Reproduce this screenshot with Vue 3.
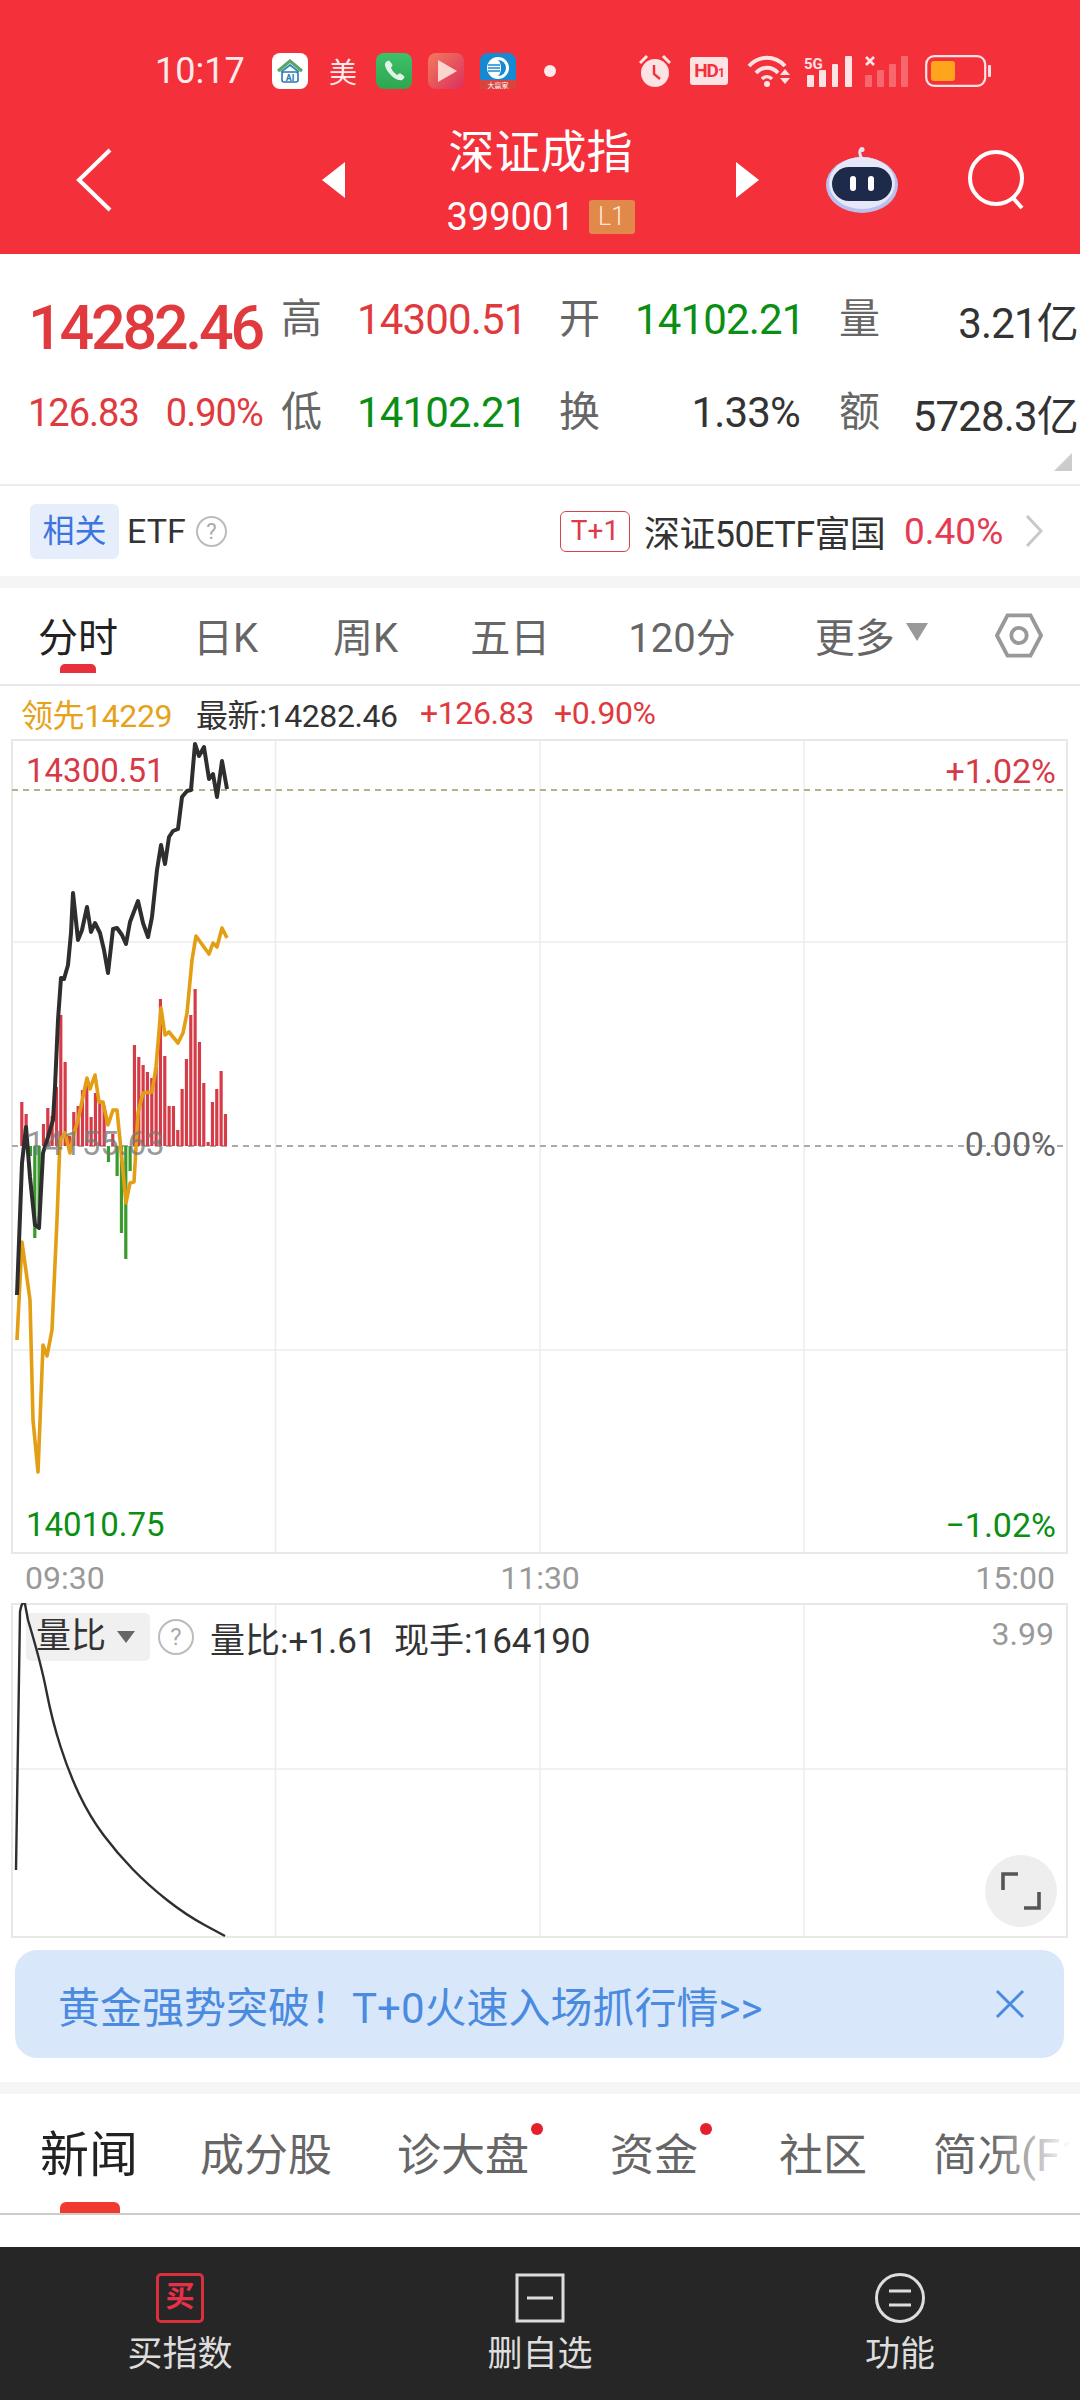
<script setup>
// black price line and amber average line, in page pixels
const priceLine = [[17,1295],[22,1163],[26,1127],[30,1177],[35,1225],[39,1228],[43,1153],[48,1137],[53,1120],[55,1087],[58,1020],[61,978],[64,979],[68,965],[71,933],[73,893],[78,940],[82,930],[87,907],[91,932],[95,923],[100,933],[104,950],[108,973],[113,929],[117,928],[122,935],[126,944],[130,922],[138,901],[143,923],[148,937],[152,917],[157,870],[161,845],[165,864],[169,837],[173,831],[178,829],[182,797],[187,791],[191,790],[195,744],[199,756],[204,747],[209,779],[213,774],[217,797],[222,761],[227,789]]
const avgLine = [[17,1340],[22,1242],[30,1300],[33,1420],[38,1472],[43,1345],[47,1356],[52,1330],[57,1220],[60,1140],[65,1133],[70,1153],[74,1133],[78,1120],[87,1078],[90,1089],[95,1075],[99,1102],[103,1102],[108,1125],[113,1110],[117,1110],[120,1140],[126,1203],[130,1183],[134,1182],[138,1113],[143,1093],[152,1092],[156,1067],[161,1008],[165,1035],[169,1032],[178,1043],[183,1033],[187,1013],[192,960],[196,936],[209,954],[213,943],[217,947],[222,928],[227,938]]
const ratioLine = [[28,1620],[41,1663],[52,1720],[69,1773],[90,1817],[117,1853],[148,1885],[186,1915],[225,1936]]

// volume bars, up is red and down is green
const barValues = [44,32,-10,-92,-80,22,38,30,59,131,84,10,34,40,56,68,29,53,46,40,-16,12,-30,-87,-113,-25,101,89,81,74,68,79,147,90,40,40,16,57,87,131,157,104,63,4,44,57,75,32]
const baseY = 1146
const bars = barValues.map((v, i) => ({
  x: 20.2 + i * 4.333,
  y: v > 0 ? baseY - v : baseY,
  h: Math.abs(v),
  color: v > 0 ? '#d63c48' : '#3a9a2e',
}))

const toPoints = (line) => line.map((p) => p.join(',')).join(' ')

// the ratio line falls off smoothly, so round it through the midpoints
function ratioPath() {
  let d = 'M16 1870 L20 1612 Q22 1600 25 1604 L' + ratioLine[0].join(' ')
  for (let i = 1; i < ratioLine.length - 1; i++) {
    const [x, y] = ratioLine[i]
    const [nx, ny] = ratioLine[i + 1]
    d += ` Q${x} ${y} ${(x + nx) / 2} ${(y + ny) / 2}`
  }
  return d + ' L225 1936'
}

const chartTabs = ['日K', '周K', '五日', '120分']
const gridX = [275.5, 540, 804]
</script>

<template>
  <div class="page">
    <header class="header">
      <div class="status">
        <span class="time">10:17</span>
        <svg class="app app-ai" viewBox="0 0 36 36">
          <rect width="36" height="36" rx="8" fill="#fff" />
          <path d="M6 18 L18 8 L30 18" fill="none" stroke="#5aa469" stroke-width="3" />
          <path d="M9 19 L18 12 L27 19" fill="none" stroke="#2f8fb8" stroke-width="2" />
          <rect x="10" y="19" width="16" height="10" rx="2" fill="none" stroke="#2a76b5" stroke-width="1.6" />
          <text x="18" y="27.5" text-anchor="middle" class="ai-text">AI</text>
        </svg>
        <span class="mei">美</span>
        <svg class="app app-phone" viewBox="0 0 36 36">
          <defs>
            <linearGradient id="ph" x1="0" y1="0" x2="0" y2="1">
              <stop offset="0" stop-color="#3dc16a" />
              <stop offset="1" stop-color="#2ea64f" />
            </linearGradient>
          </defs>
          <rect width="36" height="36" rx="8" fill="url(#ph)" />
          <path d="M10 9 C8 11 9 15 13 20 C17 25 22 28 26 27 C28 26 29 24 28 23 L24.5 20.5 C23.5 20 22.5 21 21.5 22 C19 21 15.5 17 15 14.5 C16 13.5 17 12.5 16 11 L13.5 8 C12.5 7.5 11 8 10 9 Z" fill="#fff" opacity=".85" />
        </svg>
        <svg class="app app-play" viewBox="0 0 36 36">
          <defs>
            <linearGradient id="pl" x1="0" y1="0" x2="1" y2="1">
              <stop offset="0" stop-color="#f47a5c" />
              <stop offset="1" stop-color="#db2f5e" />
            </linearGradient>
          </defs>
          <rect width="36" height="36" rx="8" fill="url(#pl)" />
          <path d="M10 7 L29 18 L10 29 Z" fill="#fbd6d0" />
        </svg>
        <svg class="app app-blue" viewBox="0 0 36 36">
          <rect width="36" height="36" rx="8" fill="#1789d2" />
          <circle cx="18" cy="15" r="11" fill="#fff" />
          <path d="M18 7 A8 8 0 0 1 18 23 C22 20 22 10 18 7 Z" fill="#1789d2" />
          <path d="M8 12 H20 M8 15 H20 M8 18 H20" stroke="#1789d2" stroke-width="1.4" />
          <rect y="27" width="36" height="9" fill="#d8453f" />
          <text x="18" y="34.5" text-anchor="middle" class="blue-text">大赢家</text>
        </svg>
        <i class="dot"></i>
        <svg class="alarm" viewBox="0 0 32 34">
          <circle cx="16" cy="19" r="14" fill="#fde3e3" />
          <path d="M15 11 V20 L21 25" fill="none" stroke="#f4313b" stroke-width="2.4" />
          <path d="M1 9 L8 2 M31 9 L24 2" stroke="#fde3e3" stroke-width="3" />
        </svg>
        <span class="hd">HD<small>1</small></span>
        <svg class="wifi" viewBox="0 0 46 32">
          <path d="M2 11 C12 0 28 0 38 11" fill="none" stroke="#fde3e3" stroke-width="4" />
          <path d="M9 18 C15 11 25 11 31 18" fill="none" stroke="#fde3e3" stroke-width="4" />
          <path d="M15 24 C18 21 22 21 25 24" fill="none" stroke="#fde3e3" stroke-width="3.5" />
          <circle cx="20" cy="29" r="3" fill="#fde3e3" />
          <path d="M33 20 L38 14 L43 20 Z M33 23 L43 23 L38 29 Z" fill="#fde3e3" />
        </svg>
        <svg class="signal" viewBox="0 0 48 32">
          <text x="0" y="14" class="five-g">5G</text>
          <rect x="3" y="20" width="7" height="12" rx="1" fill="#fde3e3" />
          <rect x="15" y="15" width="7" height="17" rx="1" fill="#fde3e3" />
          <rect x="28" y="9" width="6" height="23" rx="1" fill="#fde3e3" />
          <rect x="41" y="1" width="7" height="31" rx="1" fill="#fde3e3" />
        </svg>
        <svg class="signal-off" viewBox="0 0 44 32">
          <path d="M1 2 L9 10 M9 2 L1 10" stroke="#fde3e3" stroke-width="2.6" />
          <rect x="0" y="20" width="7" height="12" rx="1" fill="#fde3e3" opacity=".3" />
          <rect x="12" y="15" width="7" height="17" rx="1" fill="#fde3e3" opacity=".3" />
          <rect x="24" y="9" width="7" height="23" rx="1" fill="#fde3e3" opacity=".3" />
          <rect x="36" y="1" width="7" height="31" rx="1" fill="#fde3e3" opacity=".3" />
        </svg>
        <svg class="battery" viewBox="0 0 66 32">
          <rect x="1.2" y="1.2" width="59" height="29.6" rx="8" fill="none" stroke="#fde3e3" stroke-width="2.2" />
          <rect x="6" y="6" width="24" height="20" rx="3" fill="#ffa51c" />
          <rect x="63" y="10" width="3" height="12" rx="1" fill="#fde3e3" />
        </svg>
      </div>

      <div class="nav">
        <svg class="back" viewBox="0 0 38 64">
          <path d="M35 2 L4 32 L35 62" fill="none" stroke="#fff" stroke-width="4" />
        </svg>
        <i class="arrow arrow-left"></i>
        <div class="title">
          <div class="name">深证成指</div>
          <div class="code">399001<span class="level">L1</span></div>
        </div>
        <i class="arrow arrow-right"></i>
        <svg class="robot" viewBox="0 0 72 66">
          <path d="M36 12 C33 7 33 3 36 2" fill="none" stroke="#e3e3f5" stroke-width="3" />
          <circle cx="36" cy="2.5" r="2.5" fill="#e3e3f5" />
          <ellipse cx="36" cy="38" rx="36" ry="28" fill="#b9c0ee" />
          <ellipse cx="36" cy="36" rx="33" ry="26" fill="#e6e8fa" />
          <rect x="6" y="20" width="60" height="34" rx="17" fill="#1e2a4a" />
          <rect x="24" y="29" width="6" height="15" rx="3" fill="#fff" />
          <rect x="42" y="29" width="6" height="15" rx="3" fill="#fff" />
        </svg>
        <svg class="search" viewBox="0 0 60 60">
          <circle cx="29" cy="28" r="26" fill="none" stroke="#fff" stroke-width="4" />
          <path d="M46 48 L55 58" stroke="#fff" stroke-width="4" />
        </svg>
      </div>
    </header>

    <section class="quote">
      <div class="quote-row">
        <span class="price red">14282.46</span>
        <span class="label">高</span><span class="val red">14300.51</span>
        <span class="label">开</span><span class="val val-b green">14102.21</span>
        <span class="label">量</span><span class="val val-c dark">3.21亿</span>
      </div>
      <div class="quote-row">
        <span class="change red"><span>126.83</span><span>0.90%</span></span>
        <span class="label">低</span><span class="val green">14102.21</span>
        <span class="label">换</span><span class="val val-b dark">1.33%</span>
        <span class="label">额</span><span class="val val-c dark">5728.3亿</span>
      </div>
      <i class="corner"></i>
    </section>

    <section class="etf">
      <span class="etf-tag">相关</span>
      <span class="etf-name">ETF</span>
      <span class="help etf-help">?</span>
      <span class="t1">T+1</span>
      <span class="fund">深证50ETF富国</span>
      <span class="fund-rate">0.40%</span>
      <svg class="chev" viewBox="0 0 18 32">
        <path d="M2 1 L16 16 L2 31" fill="none" stroke="#c8c8c8" stroke-width="3" />
      </svg>
    </section>

    <div class="gap"></div>

    <nav class="chart-tabs">
      <span class="chart-tab active">分时<i></i></span>
      <span v-for="t in chartTabs" :key="t" class="chart-tab">{{ t }}</span>
      <span class="chart-tab more">更多<b></b></span>
      <svg class="hex" viewBox="0 0 50 46">
        <path d="M13 2 H37 L48 23 L37 44 H13 L2 23 Z" fill="none" stroke="#999" stroke-width="4" />
        <circle cx="25" cy="23" r="8" fill="none" stroke="#999" stroke-width="4" />
      </svg>
    </nav>

    <div class="info">
      <span class="lead">领先14229</span>
      <span class="latest">最新:14282.46</span>
      <span class="red info-a">+126.83</span>
      <span class="red info-b">+0.90%</span>
    </div>

    <div class="chart">
      <svg class="chart-svg" viewBox="0 739 1080 815">
        <g stroke="#ececec" stroke-width="1.5">
          <line v-for="x in gridX" :key="x" :x1="x" y1="739" :x2="x" y2="1553" />
          <line x1="12" y1="942" x2="1067" y2="942" />
          <line x1="12" y1="1350" x2="1067" y2="1350" />
        </g>
        <rect x="12" y="740" width="1055" height="813" fill="none" stroke="#e8e8e8" stroke-width="2" />
        <line x1="12" y1="790" x2="1067" y2="790" stroke="#b8b08c" stroke-width="2" stroke-dasharray="6 5" />
        <line x1="12" y1="1146" x2="1067" y2="1146" stroke="#aaa" stroke-width="2" stroke-dasharray="6 5" />
        <rect v-for="(b, i) in bars" :key="i" :x="b.x" :y="b.y" width="3.2" :height="b.h" :fill="b.color" />
        <polyline :points="toPoints(avgLine)" fill="none" stroke="#e39e14" stroke-width="3.6" stroke-linejoin="round" />
        <polyline :points="toPoints(priceLine)" fill="none" stroke="#2e2e2e" stroke-width="4" stroke-linejoin="round" />
      </svg>
      <span class="axis axis-l axis-top red-axis">14300.51</span>
      <span class="axis axis-r axis-top red-axis">+1.02%</span>
      <span class="axis axis-l axis-mid grey-axis">14155.63</span>
      <span class="axis axis-r axis-mid zero-axis">0.00%</span>
      <span class="axis axis-l axis-low green">14010.75</span>
      <span class="axis axis-r axis-low green">−1.02%</span>
    </div>

    <div class="times">
      <span>09:30</span>
      <span>11:30</span>
      <span>15:00</span>
    </div>

    <div class="sub-chart">
      <svg class="sub-svg" viewBox="0 1603 1080 335">
        <g stroke="#ececec" stroke-width="1.5">
          <line v-for="x in gridX" :key="x" :x1="x" y1="1603" :x2="x" y2="1937" />
          <line x1="12" y1="1769" x2="1067" y2="1769" />
        </g>
        <rect x="12" y="1604" width="1055" height="333" fill="none" stroke="#e8e8e8" stroke-width="2" />
      </svg>
      <div class="sub-head">
        <span class="ratio-pick">量比<b></b></span>
        <span class="help ratio-help">?</span>
        <span class="ratio-a">量比:+1.61</span>
        <span class="ratio-b">现手:164190</span>
      </div>
      <svg class="sub-line" viewBox="0 1603 1080 335">
        <path :d="ratioPath()" fill="none" stroke="#2e2e2e" stroke-width="2.4" stroke-linejoin="round" />
      </svg>
      <span class="sub-max">3.99</span>
      <span class="expand">
        <svg viewBox="0 0 40 38" width="40" height="38">
          <path d="M2 18 V2 H17 M38 20 V36 H23" fill="none" stroke="#555" stroke-width="3.6" />
        </svg>
      </span>
    </div>

    <div class="banner">
      <span>黄金强势突破！T+0火速入场抓行情&gt;&gt;</span>
      <svg class="banner-x" viewBox="0 0 30 30">
        <path d="M2 2 L28 28 M28 2 L2 28" stroke="#4a8be0" stroke-width="3" />
      </svg>
    </div>

    <div class="gap gap-b"></div>

    <nav class="news-tabs">
      <span class="news-tab active">新闻<i></i></span>
      <span class="news-tab t-2">成分股</span>
      <span class="news-tab t-3">诊大盘<em></em></span>
      <span class="news-tab t-4">资金<em></em></span>
      <span class="news-tab t-5">社区</span>
      <span class="news-tab t-6">简况(F1)</span>
      <i class="fade"></i>
    </nav>

    <footer class="actions">
      <div class="action">
        <span class="buy-icon">买</span>
        <span class="action-label">买指数</span>
      </div>
      <div class="action">
        <svg class="action-icon" viewBox="0 0 50 50">
          <rect x="2" y="2" width="46" height="46" fill="none" stroke="#ddd" stroke-width="3" />
          <path d="M12 25 H38" stroke="#ddd" stroke-width="3" />
        </svg>
        <span class="action-label">删自选</span>
      </div>
      <div class="action">
        <svg class="action-icon" viewBox="0 0 50 50">
          <circle cx="25" cy="25" r="23.5" fill="none" stroke="#ddd" stroke-width="3" />
          <path d="M14 18 H36 M14 32 H36" stroke="#ddd" stroke-width="3" />
        </svg>
        <span class="action-label">功能</span>
      </div>
    </footer>
  </div>
</template>

<style scoped>
.page {
  position: relative;
  width: 1080px;
  height: 2400px;
  overflow: hidden;
  background: #fff;
  font-family: Roboto, "Noto Sans CJK SC", sans-serif;
  color: #333;
}

.red { color: #e03a3e; }
.green { color: #0a8f14; }
.dark { color: #333; }

/* header */
.header {
  height: 254px;
  background: #f4313b;
  color: #fff;
}

.status {
  display: flex;
  align-items: center;
  height: 70px;
  padding: 36px 0 0 155px;
}

.time {
  width: 92px;
  font-size: 36px;
  color: #fdeaea;
}

.app {
  flex: none;
  width: 36px;
  height: 36px;
}

.app-ai { margin-left: 25px; }
.app-phone { margin-left: 19px; }
.app-play { margin-left: 16px; }
.app-blue { margin-left: 16px; }

.ai-text {
  font-size: 9px;
  font-weight: 700;
  fill: #2a76b5;
}

.blue-text {
  font-size: 7px;
  fill: #fff;
}

.mei {
  width: 28px;
  margin-left: 21px;
  font-size: 28px;
  color: #fdeaea;
}

.dot {
  width: 12px;
  height: 12px;
  margin-left: 28px;
  border-radius: 50%;
  background: #fdeaea;
}

.alarm { width: 32px; height: 34px; margin-left: 83px; }
.wifi { width: 46px; height: 32px; margin-left: 19px; }
.signal { width: 48px; height: 32px; margin-left: 11px; }
.signal-off { width: 44px; height: 32px; margin-left: 13px; }
.battery { width: 66px; height: 32px; margin-left: 16px; }

.five-g {
  font-size: 15px;
  font-weight: 700;
  fill: #fde3e3;
}

.hd {
  width: 38px;
  height: 28px;
  margin-left: 19px;
  border-radius: 3px;
  background: #fde3e3;
  color: #f4313b;
  font-size: 19px;
  font-weight: 700;
  line-height: 28px;
  text-align: center;
  letter-spacing: -1px;
}

.hd small { font-size: 12px; }

.nav {
  display: flex;
  align-items: center;
  height: 148px;
  padding-left: 75px;
  box-sizing: border-box;
}

.back { flex: none; width: 38px; height: 64px; }
.robot { flex: none; width: 72px; height: 66px; margin-left: 67px; }
.search { flex: none; width: 60px; height: 60px; margin-left: 69px; }

.arrow {
  flex: none;
  width: 0;
  height: 0;
  border-top: 18px solid transparent;
  border-bottom: 18px solid transparent;
}

.arrow-left {
  margin-left: 209px;
  border-right: 23px solid #fff;
}

.arrow-right { border-left: 23px solid #fff; }

.title {
  flex: none;
  width: 391px;
  text-align: center;
}

.name {
  height: 62px;
  font-size: 46px;
  line-height: 62px;
  margin-bottom: 12px;
}

.code {
  display: flex;
  align-items: center;
  justify-content: center;
  height: 44px;
  font-size: 38px;
}

.level {
  width: 46px;
  height: 34px;
  margin-left: 14px;
  background: #e0894a;
  border-radius: 3px;
  color: #ffe9d8;
  font-size: 25px;
  line-height: 34px;
  font-weight: 300;
}

/* quote panel */
.quote {
  position: relative;
  height: 232px;
  padding-top: 19px;
  box-sizing: border-box;
  border-bottom: 2px solid #ececec;
}

.quote-row {
  display: grid;
  grid-template-columns: 253px 76px 202px 76px 204px 60px 1fr;
  align-items: center;
  height: 93px;
  padding-left: 28px;
}

.price {
  padding-top: 16px;
  font-size: 61px;
  font-weight: 500;
  letter-spacing: -3.2px;
  white-space: nowrap;
}

.change {
  display: flex;
  gap: 27px;
  font-size: 38px;
  letter-spacing: -1px;
  white-space: nowrap;
}

.label {
  font-size: 41px;
  color: #666;
  line-height: 1;
}

.val {
  padding-right: 41px;
  font-size: 42px;
  text-align: right;
  letter-spacing: -0.85px;
  white-space: nowrap;
}

.val-b { padding-right: 39px; }
.val-c { padding-right: 2px; }

.corner {
  position: absolute;
  right: 8px;
  top: 199px;
  width: 0;
  height: 0;
  border-left: 18px solid transparent;
  border-bottom: 18px solid #ccc;
}

/* ETF row */
.etf {
  display: flex;
  align-items: center;
  height: 90px;
  padding-left: 30px;
}

.etf-tag {
  width: 89px;
  height: 55px;
  background: #e6eefc;
  border-radius: 6px;
  color: #3d74e0;
  font-size: 32px;
  line-height: 55px;
  text-align: center;
}

.etf-name {
  margin-left: 8px;
  font-size: 34px;
  width: 61px;
}

.help {
  display: inline-block;
  box-sizing: border-box;
  border: 2px solid #bbb;
  border-radius: 50%;
  color: #aaa;
  text-align: center;
}

.etf-help {
  width: 31px;
  height: 31px;
  margin-left: 8px;
  font-size: 22px;
  line-height: 27px;
}

.t1 {
  box-sizing: border-box;
  width: 70px;
  height: 41px;
  margin-left: 333px;
  border: 1.5px solid #d9434a;
  border-radius: 6px;
  color: #e03a4a;
  font-size: 28px;
  line-height: 37px;
  text-align: center;
}

.fund {
  margin-left: 14px;
  width: 240px;
  font-size: 36px;
  white-space: nowrap;
  letter-spacing: -0.6px;
}

.fund-rate {
  margin-left: 20px;
  width: 100px;
  color: #e63a52;
  font-size: 37px;
  white-space: nowrap;
}

.chev {
  width: 18px;
  height: 32px;
  margin-left: 21px;
}

.gap {
  height: 12px;
  background: #f5f5f5;
}

/* chart tabs */
.chart-tabs {
  position: relative;
  display: flex;
  align-items: center;
  height: 98px;
  padding: 0 0 2px 38px;
  box-sizing: border-box;
  border-bottom: 2px solid #e8e8e8;
}

.chart-tab {
  position: relative;
  margin-right: 72px;
  color: #666;
  font-size: 40px;
  white-space: nowrap;
}

.chart-tab:nth-child(2) { margin-right: 75px; }
.chart-tab:nth-child(4) { margin-right: 78px; }
.chart-tab:nth-child(5) { margin-right: 79px; }

.chart-tab.active {
  margin-right: 75px;
  color: #222;
}

.chart-tab.active i {
  position: absolute;
  left: 22px;
  top: 58px;
  width: 36px;
  height: 9px;
  border-radius: 5px 5px 0 0;
  background: #e8303a;
}

.more b {
  position: absolute;
  left: 91px;
  top: 17px;
  width: 0;
  height: 0;
  border-left: 11px solid transparent;
  border-right: 11px solid transparent;
  border-top: 18px solid #999;
}

.hex {
  position: absolute;
  left: 995px;
  top: 25px;
  width: 48px;
  height: 45px;
}

/* info line */
.info {
  display: flex;
  align-items: center;
  height: 53px;
  padding-left: 21px;
  font-size: 32px;
  letter-spacing: -0.4px;
  white-space: nowrap;
}

.lead { width: 175px; color: #e5a21a; }
.latest { width: 224px; color: #333; }
.info-a { width: 134px; }

/* main chart */
.chart {
  position: relative;
  height: 814px;
}

.chart-svg {
  display: block;
  width: 1080px;
  height: 815px;
}

.axis {
  position: absolute;
  font-size: 34px;
  line-height: 40px;
  white-space: nowrap;
}

.axis-l { left: 26px; font-size: 33px; }
.axis-r { right: 24px; }
.axis-top { top: 12px; }
.axis-mid { top: 385px; }
.axis-low { top: 766px; }
.red-axis { color: #d63a46; }
.grey-axis { color: rgba(120, 120, 120, 0.75); }
.zero-axis { color: #666; }

.times {
  display: flex;
  justify-content: space-between;
  align-items: center;
  height: 50px;
  padding: 0 25px;
  color: #999;
  font-size: 32px;
}

/* ratio chart */
.sub-chart {
  position: relative;
  height: 335px;
}

.sub-svg,
.sub-line {
  display: block;
  width: 1080px;
  height: 335px;
}

.sub-line {
  position: absolute;
  left: 0;
  top: 0;
}

.sub-head {
  position: absolute;
  left: 26px;
  top: 10px;
  display: flex;
  align-items: center;
  height: 48px;
  font-size: 35px;
  white-space: nowrap;
}

.ratio-pick {
  position: relative;
  width: 124px;
  height: 48px;
  padding-left: 10px;
  box-sizing: border-box;
  border-radius: 5px;
  background: #f0f0f0;
  font-size: 35px;
  line-height: 48px;
}

.ratio-pick b {
  position: absolute;
  left: 91px;
  top: 18px;
  width: 0;
  height: 0;
  border-left: 9px solid transparent;
  border-right: 9px solid transparent;
  border-top: 12px solid #666;
}

.ratio-help {
  width: 36px;
  height: 36px;
  margin-left: 8px;
  font-size: 24px;
  line-height: 32px;
}

.ratio-a { margin-left: 16px; width: 184px; }

.sub-max {
  position: absolute;
  right: 26px;
  top: 12px;
  color: #999;
  font-size: 32px;
}

.expand {
  position: absolute;
  left: 985px;
  top: 252px;
  display: flex;
  align-items: center;
  justify-content: center;
  width: 72px;
  height: 72px;
  border-radius: 50%;
  background: #eee;
}

/* banner */
.banner {
  display: flex;
  align-items: center;
  justify-content: space-between;
  height: 108px;
  margin: 12px 16px 24px 15px;
  padding: 0 39px 0 43px;
  border-radius: 22px;
  background: #d9e7fb;
  color: #4a8be0;
  font-size: 42px;
}

.banner-x { width: 30px; height: 30px; }

/* news tabs */
.news-tabs {
  position: relative;
  display: flex;
  align-items: center;
  height: 121px;
  padding: 4px 0 0 40px;
  box-sizing: border-box;
  border-bottom: 2px solid #ccc;
  overflow: hidden;
  white-space: nowrap;
}

.news-tab {
  position: relative;
  flex: none;
  color: #666;
  font-size: 44px;
  line-height: 60px;
}

.news-tab.active {
  color: #222;
  font-size: 49px;
}

.news-tab.active i {
  position: absolute;
  left: 20px;
  top: 76px;
  width: 60px;
  height: 12px;
  border-radius: 6px 6px 0 0;
  background: #f03a30;
}

.news-tab em {
  position: absolute;
  right: -14px;
  top: -3px;
  width: 12px;
  height: 12px;
  border-radius: 50%;
  background: #e3202c;
}

.t-2 { margin-left: 62px; }
.t-3 { margin-left: 65px; }
.t-4 { margin-left: 81px; }
.t-5 { margin-left: 81px; }
.t-6 { margin-left: 66px; }

.fade {
  position: absolute;
  right: 0;
  top: 0;
  width: 90px;
  height: 100%;
  background: linear-gradient(to right, rgba(255, 255, 255, 0), #fff 90%);
}

/* bottom bar */
.actions {
  display: grid;
  grid-template-columns: repeat(3, 1fr);
  height: 153px;
  margin-top: 32px;
  background: #262626;
}

.action {
  display: flex;
  flex-direction: column;
  align-items: center;
  padding-top: 26px;
}

.action-icon { width: 50px; height: 50px; }

.buy-icon {
  box-sizing: border-box;
  width: 48px;
  height: 50px;
  border: 3px solid #d9303e;
  border-radius: 5px;
  color: #e8304a;
  font-size: 29px;
  font-weight: 700;
  line-height: 42px;
  text-align: center;
}

.action-label {
  margin-top: 12px;
  color: #ddd;
  font-size: 35px;
  line-height: 40px;
}
</style>
